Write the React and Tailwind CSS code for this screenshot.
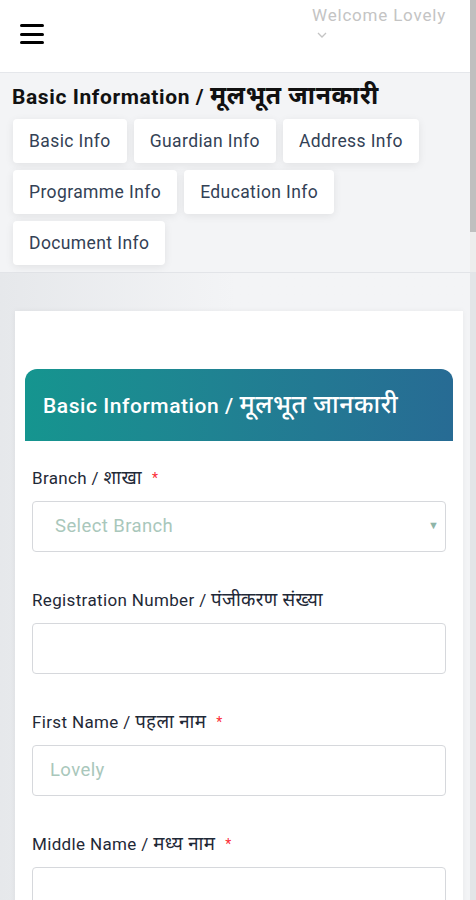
import React from 'react';

const font = { fontFamily: 'Roboto, "Noto Sans", "Noto Sans Devanagari", sans-serif' };

const tabs = [
  ['Basic Info', 'Guardian Info', 'Address Info'],
  ['Programme Info', 'Education Info'],
  ['Document Info'],
];

// devanagari glyphs render a bit bigger in the original
function Hi({ children, big }) {
  return <span className={big ? 'text-[1.18em]' : 'text-[1.1em]'}>{children}</span>;
}

function Field({ label, hi, required, placeholder, select }) {
  return (
    <div className="mb-[36px]">
      <div className="h-[24px] flex items-center text-[17px] tracking-[0.35px] text-[#1f2937] whitespace-nowrap">
        <span>
          {label} / <Hi>{hi}</Hi>
        </span>
        {required && <span className="ml-[10px] text-[14px] text-red-500">*</span>}
      </div>
      <div className="mt-[11px] h-[51px] border border-[#d6d8dc] rounded-[4px] bg-white flex items-center justify-between">
        <span
          className={`text-[18.5px] tracking-[0.4px] text-[#a9c7bb] ${select ? 'pl-[22px]' : 'pl-[17px]'}`}
        >
          {placeholder}
        </span>
        {select && <span className="pr-[6px] text-[11px] text-[#8fb5a8]">▼</span>}
      </div>
    </div>
  );
}

export default function App() {
  return (
    <div className="h-screen overflow-hidden bg-[#f3f4f6]" style={font}>
      {/* top scrolling panel */}
      <div className="flex h-[273px] border-b border-[#e2e4e8]">
        <div className="flex-1">
          <header className="h-[73px] bg-white border-b border-[#e5e7eb] flex justify-between">
            <button className="ml-[20px] mt-[24px] w-[24px] h-[20px] flex flex-col justify-between">
              <span className="block h-[3px] w-full bg-black rounded-sm"></span>
              <span className="block h-[3px] w-full bg-black rounded-sm"></span>
              <span className="block h-[3px] w-full bg-black rounded-sm"></span>
            </button>
            <div className="mr-[24px] pt-[4px] text-[17px] tracking-[0.8px] text-[#c4c4c4] leading-[22px] whitespace-nowrap">
              <div>Welcome Lovely</div>
              <svg width="12" height="8" viewBox="0 0 12 8" className="ml-[4px] mt-[5px]">
                <path d="M2 2l4 4 4-4" fill="none" stroke="#c4c4c4" strokeWidth="1.3" />
              </svg>
            </div>
          </header>
          <div className="px-[12px] pt-[9px]">
            <h1 className="text-[21px] font-bold tracking-[0.6px] text-[#111] leading-[28px] whitespace-nowrap">
              Basic Information / <Hi big>मूलभूत जानकारी</Hi>
            </h1>
            <div className="mt-[8px] flex flex-col gap-[7px] pl-[1px]">
              {tabs.map((row, i) => (
                <div key={i} className="flex gap-[7px]">
                  {row.map((t) => (
                    <button
                      key={t}
                      className="h-[44px] px-[16px] bg-white rounded-[4px] shadow-[0_2px_8px_rgba(0,0,0,0.08)] text-[17.5px] tracking-[0.4px] text-[#334155] whitespace-nowrap"
                    >
                      {t}
                    </button>
                  ))}
                </div>
              ))}
            </div>
          </div>
        </div>
        <div className="w-[6px] bg-[#ededed]">
          <div className="h-[232px] bg-[#bfbfbf]"></div>
        </div>
      </div>

      {/* main form area */}
      <div className="flex h-full">
        <div className="flex-1 pl-[15px] pr-[7px] pt-[38px] bg-gradient-to-r from-[#e6e8eb] via-[#f3f4f6] to-[#f3f4f6]">
          <div className="bg-white h-full shadow-[0_0_6px_rgba(0,0,0,0.05)] pt-[58px] px-[10px]">
            <div className="h-[72px] rounded-t-[12px] bg-gradient-to-r from-[#15958f] to-[#276b94] flex items-center px-[18px]">
              <h2 className="text-[21px] font-medium tracking-[0.55px] text-white whitespace-nowrap">
                Basic Information / <Hi big>मूलभूत जानकारी</Hi>
              </h2>
            </div>
            <div className="px-[7px] pt-[25px]">
              <Field label="Branch" hi="शाखा" required placeholder="Select Branch" select />
              <Field label="Registration Number" hi="पंजीकरण संख्या" placeholder="" />
              <Field label="First Name" hi="पहला नाम" required placeholder="Lovely" />
              <Field label="Middle Name" hi="मध्य नाम" required placeholder="" />
            </div>
          </div>
        </div>
        <div className="w-[6px] bg-[#e3e5e8]"></div>
      </div>
    </div>
  );
}
